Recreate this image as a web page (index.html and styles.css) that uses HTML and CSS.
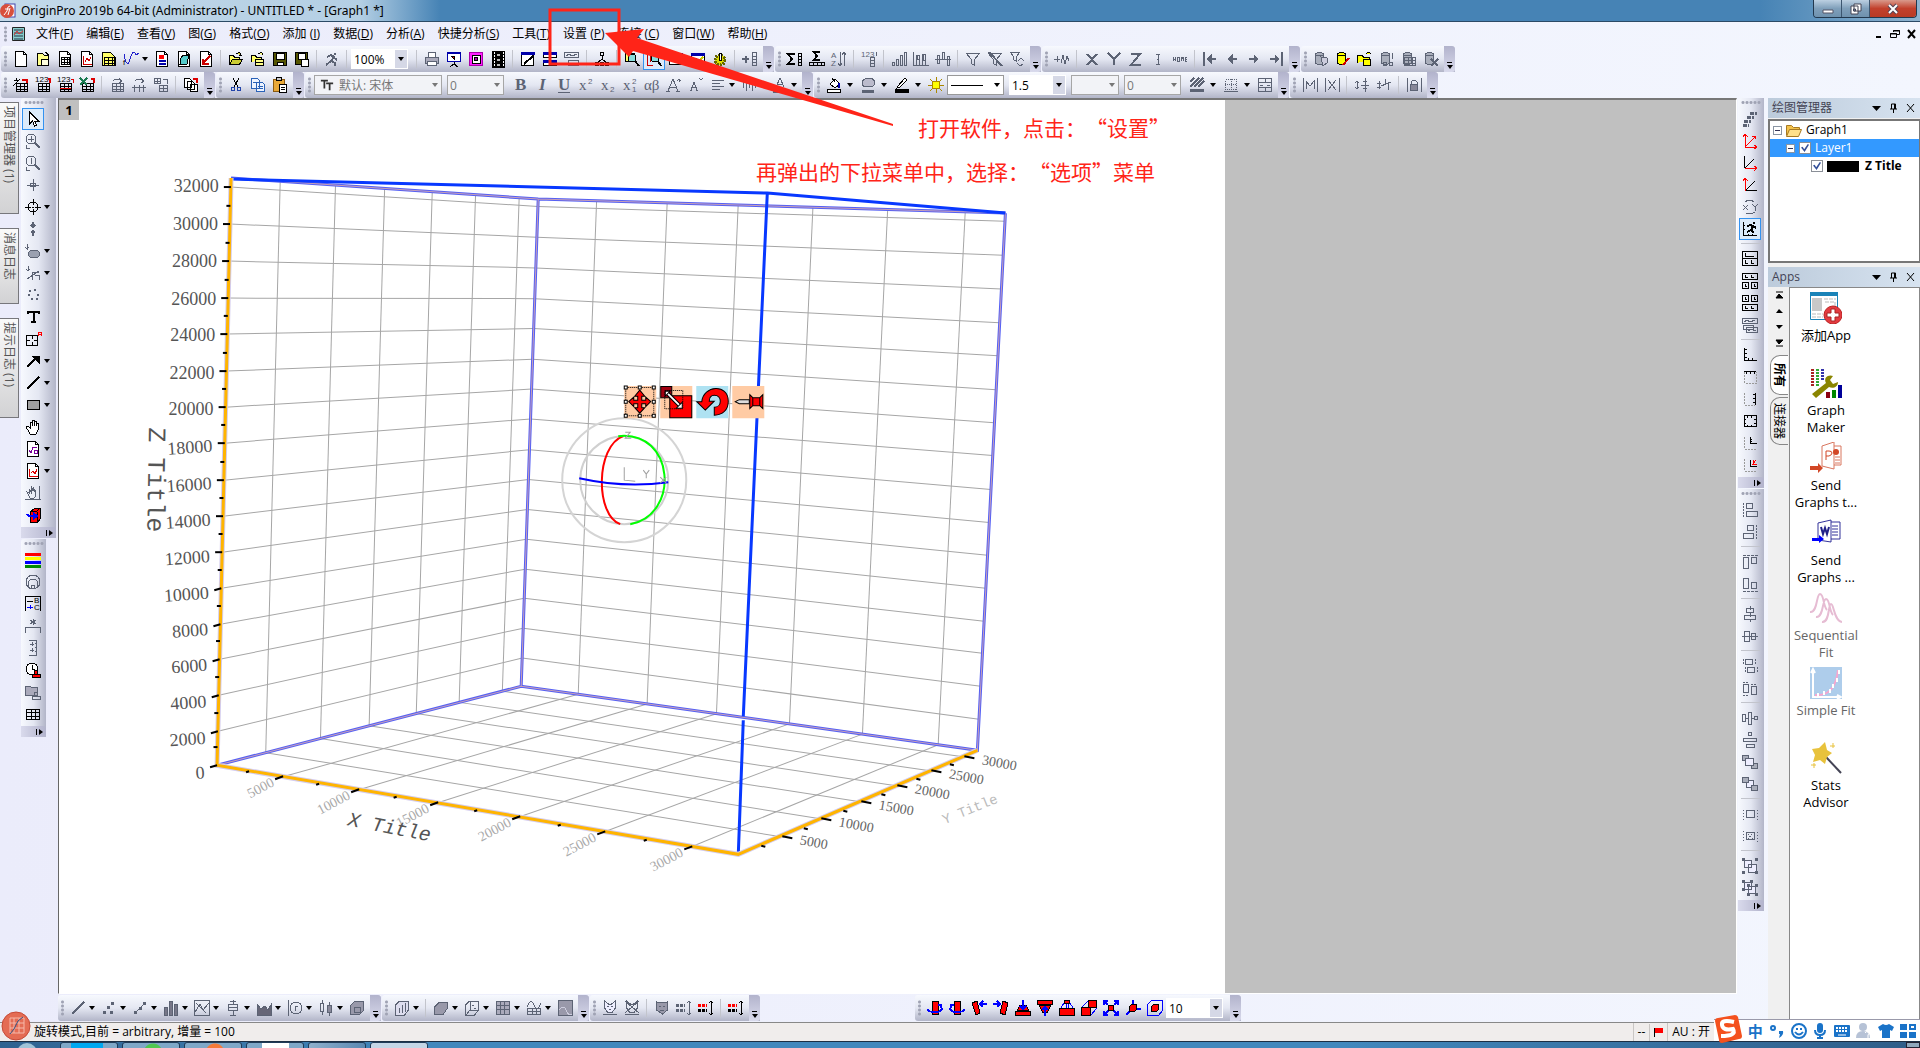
FILE: index.html
```html
<!DOCTYPE html>
<html lang="zh-CN">
<head>
    <meta charset="UTF-8">
    <meta name="viewport" content="width=device-width, initial-scale=1.0">
    <title>OriginPro 2019b</title>
    <link rel="stylesheet" href="styles.css">
</head>
<body>
    <!-- Title bar -->
    <header class="title-bar">
        <svg class="app-logo" viewBox="0 0 16 16"><rect x="5" y="1" width="10" height="13" fill="#fff" stroke="#44a"/><circle cx="7" cy="8" r="7" fill="#d8503c"/><path d="M4 12l3-4 1-4 2-1M5 6h4M8 12l2-7" stroke="#fff" fill="none"/></svg>
        <h1>OriginPro 2019b 64-bit (Administrator) - UNTITLED * - [Graph1 *]</h1>
        <div class="window-buttons">
            <button aria-label="Minimize"><svg viewBox="0 0 16 12"><path d="M3 7h10v3H3z" fill="#fff" stroke="#556"/></svg></button>
            <button aria-label="Restore"><svg viewBox="0 0 16 12"><path d="M6 1h7v7H6zM3 3h7v8H3z" fill="#fff" stroke="#445"/><path d="M5.500 6h2v2h-2z" stroke="#445" fill="#68a"/></svg></button>
            <button class="close" aria-label="Close"><svg viewBox="0 0 16 12"><path d="M4 2l8 8M12 2l-8 8" stroke="#545" stroke-width="4"/><path d="M4 2l8 8M12 2l-8 8" stroke="#fff" stroke-width="2"/></svg></button>
        </div>
    </header>

    <nav class="menu-bar">
        <i class="grip"></i>
        <svg class="doc-logo" viewBox="0 0 16 16"><path d="M2.500 1.500h12v13h-12z" fill="#8cc" stroke="#222"/><path d="M4 4h9M4 7h9M4 10h9M4 13h9" stroke="#234"/><path d="M4 9l3-4 2 3 4-3" stroke="#d33" fill="none"/></svg>
        <a href="#">文件(<u>F</u>)</a>
        <a href="#">编辑(<u>E</u>)</a>
        <a href="#">查看(<u>V</u>)</a>
        <a href="#">图(<u>G</u>)</a>
        <a href="#">格式(<u>O</u>)</a>
        <a href="#">添加 (<u>I</u>)</a>
        <a href="#">数据(<u>D</u>)</a>
        <a href="#">分析(<u>A</u>)</a>
        <a href="#">快捷分析(<u>S</u>)</a>
        <a href="#">工具(<u>T</u>)</a>
        <a href="#">设置 (<u>P</u>)</a>
        <a href="#">连接 (<u>C</u>)</a>
        <a href="#">窗口(<u>W</u>)</a>
        <a href="#">帮助(<u>H</u>)</a>
        <div class="child-buttons">
            <button aria-label="Minimize graph"><svg viewBox="0 0 10 10"><path d="M2 8h5" stroke="#000" stroke-width="2"/></svg></button>
            <button aria-label="Restore graph"><svg viewBox="0 0 10 10"><path d="M3.500 3V1.500h6v4H7M3 2h7M.5 4.500h6v4h-6zM0 5h7" stroke="#000" fill="none"/></svg></button>
            <button aria-label="Close graph"><svg viewBox="0 0 10 10"><path d="M2 1l7 8M9 1L2 9" stroke="#000" stroke-width="2"/></svg></button>
        </div>
    </nav>

    <!-- Toolbars -->
    <div class="tool-row">
        <div class="toolbar">
            <span data-tools="new folder sheet graph ygrid fx> layout note newgraph | open opentpl save savetpl | ~run |"></span>
            <label class="combo w56"><select aria-label="Zoom"><option>100%</option></select></label>
            <span data-tools="| ~print slide record film | edit rows ~panel | tree | find find2! table2 table3 gear | ~addcol"></span>
        </div>
        <div class="toolbar"><span data-tools="sumcol sumrow ~sort | ~setval | ~bars ~bars2 ~bars3 | ~filter ~nofilter ~refilter"></span></div>
        <div class="toolbar"><span data-tools="~addpeak | ~X ~Y ~Z ~errbar ~home | ~first ~left ~right ~last"></span></div>
        <div class="toolbar"><span data-tools="~db dbedit dbopen ~dbview ~dbgrid ~dbdel"></span></div>
    </div>
    <div class="tool-row">
        <div class="toolbar"><span data-tools="wizard imp1 imp2 excel | ~reimp ~reimp2 ~reimp3 | batch"></span></div>
        <div class="toolbar"><span data-tools="cut copy paste"></span></div>
        <div class="toolbar">
            <label class="combo off w128"><svg class="tt" viewBox="0 0 16 16"><path d="M1 3h8M5 3v9M7 6h8M11 6v8" stroke="#333" stroke-width="2"/></svg><select aria-label="Font"><option>默认: 宋体</option></select></label>
            <label class="combo off w56"><select aria-label="Font size"><option>0</option></select></label>
            <span data-tools="~B ~I ~U ~sup ~sub ~supsub ~greek ~Abig ~Asmall ~align> ~vlines> ~Acolor>"></span>
        </div>
        <div class="toolbar roomy">
            <span data-tools="bucket> ~palette> pen> sun"></span>
            <label class="combo line w56"><select aria-label="Line style"><option></option></select></label>
            <label class="combo w56"><select aria-label="Line width"><option>1.5</option></select></label>
            <label class="combo off w48"><select aria-label="Pattern"><option></option></select></label>
            <label class="combo off w56"><select aria-label="Pattern width"><option>0</option></select></label>
            <span data-tools="~hatch> ~border> ~merge"></span>
        </div>
        <div class="toolbar"><span data-tools="~maskM ~maskX | ~updown ~updown2 | ~lock"></span></div>
    </div>

    <main class="workspace">
        <aside class="side-tabs">
            <button class="long">项目管理器 (1)</button>
            <button>消息日志</button>
            <button class="mid">提示日志 (1)</button>
        </aside>

        <div class="tool-col left">
            <div class="toolbar wide"><span data-tools="cursor! ~zoomin ~zoomout ~cross target> ~reader ~ellipse> ~mask> ~dots text region arrow> line> rect> hand formula> minigraph> ~pan rotate3d"></span></div>
            <div class="toolbar"><span data-tools="colorbars ~bubble legend ~star ~scale clock ~stamp grid"></span></div>
        </div>

        <section class="document">
            <div class="canvas">
                <div class="sheet">
                    <span class="layer-no">1</span>
                    <svg class="plot" viewBox="59 100 1165 892" preserveAspectRatio="xMinYMin meet">
                        <g id="grid"></g>
                        <path class="frame" d="M231 178L538 199L1005 213M538 199L521 686M217 765L521 686L977 750L1005 213"/>
                        <path class="frame-core" d="M231 178L538 199L1005 213M538 199L521 686M217 765L521 686L977 750L1005 213"/>
                        <path class="front" d="M231 179L767 193L1005 213M767 193L743 716M743 720L738 854"/>
                        <path class="axis-glow" d="M231 178L217 765L738 854L977 750"/>
                        <path class="axis" d="M231 178L217 765L738 854L977 750"/>
                        <g id="ticks"></g>
                        <g id="labels"></g>
                        <text class="axis-title" transform="translate(149 427) rotate(91)">Z Title</text>
                        <text class="axis-title x" transform="translate(347 825) rotate(11)">X Title</text>
                        <text class="axis-title y" transform="translate(944 824) rotate(-22)">Y Title</text>

                        <!-- Rotation gizmo -->
                        <g fill="none" stroke-width="2">
                            <circle cx="624" cy="480" r="62" stroke="#d4d4d4"/>
                            <circle cx="624" cy="480" r="44" stroke="#d0d0d0"/>
                            <path d="M623 436C595 446 595 515 620 524" stroke="#f00"/>
                            <path d="M618 436C675 430 680 515 630 524" stroke="#0f0"/>
                            <path d="M579 478Q624 488 668 482" stroke="#00f"/>
                            <path d="M624 467v13l11 1M625 432h5l-5 6h6M643 470l3 4 3-4M646 474v4M660 477l6 6M666 477l-6 6" stroke="#a0a0a0" stroke-width="1"/>
                        </g>
                        <g transform="translate(624 386)">
                            <path d="M0 0h32v32H0zM36 0h32v32H36zM108 0h32v32h-32z" fill="#ffcba4"/>
                            <path d="M72 0h32v32H72z" fill="#aee2f2"/>
                            <path d="M1.500 1.500h28v28h-28z" fill="none" stroke="#000" stroke-dasharray="1 1"/>
                            <path d="M0 0h3v3H0zM14 0h3v3h-3zM28 0h3v3h-3zM0 14h3v3H0zM28 14h3v3h-3zM0 28h3v3H0zM14 28h3v3h-3zM28 28h3v3h-3z" fill="#fff" stroke="#000"/>
                            <path d="M15.500 4l5 6h-3v4h4v-3l5 4.500-5 5v-3h-4v4h3l-5 5.500-5-5.500h3v-4h-4v3l-5-5 5-4.500v3h4v-4h-3z" fill="#f00" stroke="#000"/>
                            <path d="M36.500.5h11v11h-11z" fill="#a00010" stroke="#000"/>
                            <path d="M45.500 9.500h22v22h-22z" fill="#f00" stroke="#000"/>
                            <path d="M40.500 4.500h18v18h-18z" fill="none" stroke="#000" stroke-dasharray="1 1"/>
                            <path d="M42 6l14 14" stroke="#000" stroke-width="4"/><path d="M42 6l14 14" stroke="#fff" stroke-width="2"/><path d="M41 5h5l-5 5zM58 22h-6l6-6z" fill="#fff" stroke="#000"/>
                            <path d="M72.500 15.500h5C79-1 104-3 104 15c0 9-6 14-14 14v-8c8 0 8-12 0-12-4 0-5 3-5 6h5l-9 9z" fill="#f00" stroke="#000"/>
                            <path d="M111 15.500l4-2h10v4h-10z" fill="#ddd" stroke="#000"/>
                            <path d="M125.500 8.500l3 3h7l3-3v14l-3-3h-7l-3 3zM128.500 11v9M135.500 11v9" fill="#f00" stroke="#000"/>
                        </g>
                    </svg>
                </div>
            </div>
            <div class="tool-row bottom">
                <div class="toolbar"><span data-tools="~line> ~scatter> ~linedot> ~column> ~peaks> ~box> ~area> ~polar> ~candle> ~cube"></span></div>
                <div class="toolbar"><span data-tools="~bar3d> | ~surface> ~wire> ~heat> ~wave> ~contour"></span></div>
                <div class="toolbar"><span data-tools="~fox ~foxoff | ~mask2 ~swap swapred | swapall"></span></div>
                <div class="toolbar apart">
                    <span data-tools="rotL rotR tiltL tiltR tiltD tiltU persp persp2 fit axes3d box3d"></span>
                    <label class="combo w56"><select aria-label="Rotation step"><option>10</option></select></label>
                </div>
            </div>
        </section>

        <div class="tool-col right">
            <div class="toolbar"><span data-tools="~stack axA axB axC ~xy speed! | lay1 lay2 lay3 ~lay4 | axL axT axR axBox axin axinr"></span></div>
            <div class="toolbar"><span data-tools="~alL ~alR | ~alT ~alB | ~alH ~alV | ~same1 ~same2 | ~dist1 ~dist2 ~front ~back | ~grp1 ~grp2 | ~grp3 ~grp4"></span></div>
        </div>

        <aside class="panels">
            <section class="panel manager">
                <header><h2>绘图管理器</h2><span class="panel-tools"></span></header>
                <ul class="tree">
                    <li><i class="toggle"></i><svg class="dir" viewBox="0 0 16 13"><path d="M.5 11.500v-10h5l2 2h6v3" fill="#f3c24b" stroke="#a77a22"/><path d="M.5 12.500l3-7h12l-3 7z" fill="#ffe08a" stroke="#a77a22"/></svg><span>Graph1</span></li>
                    <li class="selected"><i class="toggle"></i><input type="checkbox" id="layer1" checked><label for="layer1">Layer1</label></li>
                    <li class="leaf"><input type="checkbox" id="ztitle" checked><label for="ztitle"><i class="swatch"></i>Z Title</label></li>
                </ul>
            </section>
            <section class="panel apps">
                <header><h2>Apps</h2><span class="panel-tools"></span></header>
                <div class="apps-body">
                    <div class="apps-tabs">
                        <button aria-label="Top"><svg viewBox="0 0 8 8"><path d="M1 1h7M1 7h7L4 3z" stroke="#000"/></svg></button>
                        <button aria-label="Up"><svg viewBox="0 0 8 8"><path d="M1 6h7L4 2z"/></svg></button>
                        <button aria-label="Down"><svg viewBox="0 0 8 8"><path d="M1 2h7L4 6z"/></svg></button>
                        <button aria-label="Bottom"><svg viewBox="0 0 8 8"><path d="M1 1h7L4 5zM1 7h7" stroke="#000"/></svg></button>
                        <button class="tab active">所有</button>
                        <button class="tab">连接器</button>
                    </div>
                    <div class="apps-list">
                        <button><svg viewBox="0 0 32 32"><path d="M.5 1.500h27v26H.5z" fill="#fff" stroke="#1a83b8"/><path d="M0 0h28v4H0z" fill="#1a83b8"/><path d="M2 6h10v13H2z" fill="#c8c8c8"/><path d="M14 7h12M15 10h10v10M2 22h11M2 25h11" stroke="#bbb" stroke-dasharray="4 1" fill="none"/><circle cx="23" cy="23" r="9" fill="#e33b40" stroke="#b22"/><path d="M21 17h4v4h4v4h-4v4h-4v-4h-4v-4h4z" fill="#fff" stroke="#a22"/></svg><span>添加App</span></button>
                        <button><svg viewBox="0 0 32 32"><path d="M2.500 2v17" stroke="#a22" stroke-width="3" stroke-dasharray="2 1"/><path d="M7.500 2v17" stroke="#3a3" stroke-width="3" stroke-dasharray="2 1"/><path d="M12.500 2v12" stroke="#33a" stroke-width="3" stroke-dasharray="2 1"/><path d="M2 27l14-11c-3-6 3-9 7-7l-3 4 3 4 5-2c0 5-5 7-9 5L6 31z" fill="#8a8500"/><path d="M16 25h4v6h-4z" fill="#8b0010"/><path d="M22 23h4v8h-4z" fill="#080"/><path d="M28 18h4v13h-4z" fill="#009"/></svg><span>Graph Maker</span></button>
                        <button><svg viewBox="0 0 32 32"><path d="M12 4l12-4v27l-12-3zM24 4h7v19h-7M25 15h5M25 18h5M25 21h5" fill="#fff" stroke="#d9765f"/><circle cx="26" cy="10" r="3" fill="#d24726"/><path d="M16 18V9h3q3 0 3 2t-3 3h-3" fill="none" stroke="#d24726"/><path d="M0 24h8v-3l5 5-5 5v-3H0z" fill="#d24726"/></svg><span>Send Graphs t...</span></button>
                        <button><svg viewBox="0 0 32 32"><path d="M8 6l13-3v22L8 23zM21 5h9v17h-9M22 9h6M22 12h6M22 15h6M22 18h6" fill="#fff" stroke="#33339a"/><path d="M11 10l2 7 2-6 2 6 2-7" fill="none" stroke="#222288" stroke-width="2"/><path d="M2 21h7v-3l5 4-5 4v-2H2z" fill="#00f"/></svg><span>Send Graphs ...</span></button>
                        <button disabled><svg viewBox="0 0 32 32"><path d="M0 20c8 1 6-18 10-18s3 12 7 16M6 25c8 1 6-18 10-18s3 12 7 16M12 30c8 1 6-18 9-18s3 17 11 18" fill="none" stroke="#e6bcd3" stroke-width="2"/></svg><span>Sequential Fit</span></button>
                        <button disabled><svg viewBox="0 0 32 32"><path d="M0 0h32v32H0z" fill="#aecdeb"/><path d="M3 3v27h27M1 6l2-4 2 4M27 28l4 2-4 2" stroke="#fff" stroke-width="2" fill="none"/><path d="M5 28q20 2 23-25" stroke="#f6a6cf" stroke-width="2" fill="none"/><path d="M8 26v4M14 24v4M20 22v4M23 17v4M27 11v4M29 3v4" stroke="#fff" stroke-width="2"/></svg><span>Simple Fit</span></button>
                        <button><svg viewBox="0 0 32 32"><path d="M16 15l15 16" stroke="#445" stroke-width="2"/><path d="M15 0l2 8 5 3-5 4-2 7-5-4-7 2 2-7-3-6 7-1z" fill="#e8c23c"/><path d="M23 1v5M20 4h5M4 21v5M1 23h5" stroke="#e8c23c"/></svg><span>Stats Advisor</span></button>
                    </div>
                </div>
            </section>
        </aside>
    </main>

    <footer class="status-bar">
        <svg class="orb" viewBox="0 0 30 30"><circle cx="15" cy="15" r="14" fill="#e46c54" stroke="#c64b38"/><path d="M9 7h14v15H9zM13 7v15M18 7v15M9 12h14M9 17h14" stroke="#f6b9aa" fill="none"/><path d="M9 23l4-5 4-8 5-4" stroke="#358" fill="none"/></svg>
        <span>旋转模式,目前 = arbitrary, 增量 = 100</span>
        <span class="cell push">--</span>
        <span class="cell"><i class="flag"></i></span>
        <span class="cell">AU : 开</span>
        <div class="ime">
            <svg class="sogou" viewBox="0 0 28 28"><path d="M1 6q0-3 3-3L21 0q2 0 3 2l4 19q0 3-3 3L8 28q-3 0-3-3z" fill="#f4511e"/><path d="M20 7Q7 4 8 10t11 4q4 7-12 7" fill="none" stroke="#fff" stroke-width="4"/></svg>
            <b>中</b>
            <svg viewBox="0 0 16 16"><circle cx="4" cy="5" r="2" fill="none" stroke="#1a73c8" stroke-width="2"/><path d="M10 8h4q1 4-4 7l1-4h-1z" fill="#1a73c8"/></svg>
            <svg viewBox="0 0 16 16"><g fill="none" stroke="#1a73c8" stroke-width="2"><circle cx="8" cy="8" r="7"/><path d="M4 9q4 5 8 0M6 5v2M10 5v2"/></g></svg>
            <svg viewBox="0 0 16 16"><rect x="5" y="0" width="6" height="10" rx="3" fill="#1a73c8"/><path d="M3 7q0 5 5 5t5-5M8 12v3M5 15h6" fill="none" stroke="#1a73c8" stroke-width="2"/></svg>
            <svg viewBox="0 0 16 16"><rect y="2" width="16" height="12" rx="1" fill="#1a73c8"/><path d="M2 5h12M2 8h12" stroke="#fff" stroke-width="2" stroke-dasharray="2 1"/><path d="M4 12h8" stroke="#fff"/></svg>
            <svg viewBox="0 0 16 16"><circle cx="7" cy="4" r="4" fill="#b6c2d6"/><path d="M0 15q0-7 7-7t7 7z" fill="#b6c2d6"/><path d="M9 10q1-2 3-1t0 3v3" stroke="#fff" fill="none"/></svg>
            <svg viewBox="0 0 16 16"><path d="M5 1q3 2 6 0l5 3-2 4-2-1v8H4V7L2 8 0 4z" fill="#1a73c8"/></svg>
            <svg viewBox="0 0 16 16"><path d="M0 1h7v6H0zM0 9h7v6H0zM9 9h7v6H9z" fill="#1a73c8"/><path d="M10 2h5v4h-5z" fill="none" stroke="#1a73c8" stroke-width="2"/></svg>
        </div>
    </footer>

    <div class="taskbar">
        <i class="start"></i>
        <i class="task cyan"></i><i class="task green"></i><i class="task orange"></i><i class="task white"></i><i class="task"></i><i class="task active"></i>
        <i class="show-desktop"></i>
    </div>

    <!-- Tutorial annotations over the window -->
    <div class="notes">
        <svg viewBox="0 0 400 140">
            <rect x="10" y="10" width="69" height="54" fill="none" stroke="#ff2418" stroke-width="3"/>
            <path d="M65 33L104 29 97 38 353 124v2L93 51 89 57z" fill="#ff2418"/>
        </svg>
        <p class="note first">打开软件，点击：“设置”</p>
        <p class="note second">再弹出的下拉菜单中，选择：“选项”菜单</p>
    </div>

    <script src="app.js"></script>
</body>
</html>
```
FILE: styles.css
```css
* {
    box-sizing: border-box;
}

body {
    margin: 0;
    height: 100vh;
    display: flex;
    flex-direction: column;
    position: relative;
    overflow: hidden;
    background: linear-gradient(to right, #ebecfb, #f3f6fe);
    font-family: "Open Sans", "Noto Sans CJK SC", sans-serif;
    font-size: 12px;
    color: #000;
}

button, select, input {
    font: inherit;
    color: inherit;
}

button {
    padding: 0;
    border: none;
    background: none;
}

h1, h2, p, ul {
    margin: 0;
    padding: 0;
    font-weight: normal;
}

/* Title bar */
.title-bar {
    flex: none;
    height: 22px;
    display: flex;
    align-items: center;
    background: linear-gradient(to right, #c3d9ea, #b4cfe4 360px, #4683b5 440px, #4683b5 1760px, #8fb4d0);
    border-bottom: 1px solid #2b4a66;
}

.app-logo {
    width: 16px;
    height: 16px;
    margin-right: 5px;
}

.title-bar h1 {
    font-family: "Noto Sans", sans-serif;
    font-size: 12px;
    line-height: 20px;
}

.window-buttons {
    margin-left: auto;
    margin-right: 3px;
    align-self: flex-start;
    display: flex;
    height: 18px;
    border: 1px solid #22384e;
    border-top: none;
    border-radius: 0 0 4px 4px;
    overflow: hidden;
}

.window-buttons button {
    width: 28px;
    background: linear-gradient(#bcd0e2, #7f9fba 50%, #6f92ae);
    border-right: 1px solid #3c5670;
}

.window-buttons .close {
    width: 46px;
    border-right: none;
    background: linear-gradient(#d99a8c, #c2402c 50%, #b83a24);
}

.window-buttons svg {
    width: 16px;
    height: 12px;
    display: block;
    margin: 0 auto;
}

/* Menu */
.menu-bar {
    flex: none;
    height: 24px;
    display: flex;
    align-items: center;
    padding-left: 3px;
}

.menu-bar a {
    color: #000;
    text-decoration: none;
    margin-right: 13px;
    white-space: nowrap;
    line-height: 20px;
}

.doc-logo {
    width: 16px;
    height: 16px;
    margin: 0 10px 0 2px;
}

.child-buttons {
    margin-left: auto;
    display: flex;
    gap: 6px;
    padding-right: 4px;
}

.child-buttons svg {
    width: 10px;
    height: 10px;
    display: block;
}

/* Toolbars */
.grip {
    flex: none;
    width: 9px;
    height: 16px;
    background: radial-gradient(circle, #a0a3b4 1px, transparent 2px) 0 0 / 9px 4px;
}

.menu-bar .grip {
    width: 5px;
    background-size: 5px 4px;
}

.tool-row {
    flex: none;
    height: 26px;
    display: flex;
    gap: 1px;
    padding-left: 1px;
}

.toolbar {
    display: flex;
    align-items: center;
    background: linear-gradient(#f7f9fe, #e4e7f2 50%, #b2b5c8);
    border-radius: 3px 0 0 3px;
}

.toolbar span {
    display: flex;
    align-items: center;
}

.tool {
    flex: none;
    width: 22px;
    height: 22px;
    display: flex;
    align-items: center;
    justify-content: center;
    color: #000;
}

.tool svg {
    width: 16px;
    height: 16px;
    overflow: visible;
    fill: none;
    stroke: currentColor;
    shape-rendering: crispEdges;
}

.tool svg text {
    font: 15px "Liberation Serif", serif;
    fill: currentColor;
    stroke: none;
}

.tool svg .tiny {
    font: 8px "Liberation Sans", sans-serif;
}

.tool svg .strong {
    font-size: 17px;
    font-weight: bold;
}

.tool svg .strong.slant {
    font-style: italic;
}

.tool.muted {
    color: #5c6374;
}

.tool.on {
    background: #dcebfa;
    border: 1px solid #3392f0;
}

.drop {
    flex: none;
    width: 9px;
    height: 22px;
    display: flex;
    align-items: center;
}

.roomy .drop {
    width: 12px;
    padding-left: 2px;
}

.drop::before, .combo::after {
    content: "";
    border: 3px solid transparent;
    border-top: 4px solid #000;
    border-bottom: none;
}

.sep {
    flex: none;
    width: 1px;
    height: 18px;
    margin: 0 4px 0 3px;
    background: #c2c4cc;
}

.overflow {
    flex: none;
    align-self: stretch;
    width: 11px;
    margin-left: 2px;
    display: flex;
    flex-direction: column;
    justify-content: flex-end;
    align-items: center;
    padding-bottom: 3px;
    background: linear-gradient(#b2b3cc, #d9daec);
    border-radius: 0 3px 3px 0;
}

.overflow::before {
    content: "";
    width: 5px;
    height: 1px;
    margin-bottom: 2px;
    background: #000;
}

.overflow::after {
    content: "";
    border: 3px solid transparent;
    border-top: 4px solid #000;
    border-bottom: none;
}

.combo {
    flex: none;
    height: 20px;
    display: flex;
    align-items: center;
    background: linear-gradient(to left, #d5d8e6 12px, #fff 12px);
    border: 1px solid #fff;
    margin-right: 5px;
    padding-right: 3px;
}

.combo select {
    appearance: none;
    border: none;
    background: none;
    flex: 1;
    min-width: 0;
    height: 18px;
    padding: 0 2px;
}

.combo.off {
    background: #f2f3f7;
    border: 1px solid #a6a6a6;
    color: #777;
}

.combo.off::after {
    border-top-color: #777;
}

.combo.line {
    background: #fff;
    border: 1px solid #999;
}

.combo.line select {
    background: linear-gradient(#000, #000) 3px 9px / 32px 1px no-repeat;
}

.w48 { width: 48px; }
.w56 { width: 57px; }
.w128 { width: 128px; }

.tt {
    width: 14px;
    height: 14px;
    margin: 0 3px 0 5px;
}

/* Main area */
.workspace {
    flex: 1;
    min-height: 0;
    display: flex;
}

.side-tabs {
    flex: none;
    width: 21px;
    padding-top: 4px;
    display: flex;
    flex-direction: column;
    gap: 14px;
}

.side-tabs button {
    width: 19px;
    height: 76px;
    padding: 3px 0;
    writing-mode: vertical-rl;
    text-orientation: sideways;
    text-align: left;
    line-height: 16px;
    color: #555;
    white-space: nowrap;
    background: linear-gradient(#fafafa, #d2d2d4);
    border: 1px solid #77777c;
    border-left: none;
}

.side-tabs .long {
    height: 112px;
}

.side-tabs .mid {
    height: 100px;
}

.tool-col {
    flex: none;
    display: flex;
    flex-direction: column;
    align-items: flex-start;
    gap: 1px;
}

.tool-col.left {
    width: 37px;
}

.tool-col.right {
    width: 31px;
    padding-left: 1px;
}

.tool-col .toolbar {
    flex-direction: column;
    align-items: stretch;
    width: 25px;
    background: linear-gradient(to right, #f7f9fe, #e4e7f2 50%, #b2b5c8);
}

.tool-col .toolbar.wide {
    width: 35px;
}

.tool-col.right .toolbar {
    width: 26px;
}

.tool-col .toolbar span {
    display: grid;
    grid-template-columns: 22px 1fr;
    padding-left: 1px;
}

.tool-col .tool {
    grid-column: 1;
}

.tool-col .grip {
    width: 20px;
    height: 10px;
    margin-left: 3px;
    background: radial-gradient(circle, #a0a3b4 1px, transparent 2px) 0 0 / 4px 9px;
}

.tool-col .sep {
    grid-column: 1;
    width: 19px;
    height: 1px;
    margin: 3px 2px 4px;
}

.tool-col .overflow {
    flex-direction: row;
    align-items: center;
    width: auto;
    height: 11px;
    margin: 1px 0 0;
    padding: 0 3px;
    background: linear-gradient(to right, #d9daec, #b2b3cc);
}

.tool-col .overflow::before {
    width: 1px;
    height: 6px;
    margin: 0 2px 0 0;
}

.tool-col .overflow::after {
    border: 3px solid transparent;
    border-left: 4px solid #000;
    border-right: none;
}

.document {
    flex: 1;
    min-width: 0;
    display: flex;
    flex-direction: column;
}

.canvas {
    flex: 1;
    min-height: 0;
    background: #c0c0c0;
    border: 1px solid #fff;
    border-top: 2px solid #777;
    border-left: 1px solid #666;
}

.sheet {
    position: relative;
    width: 69.5%;
    height: 100%;
    background: #fff;
}

.plot {
    display: block;
    width: 100%;
    height: 100%;
}

.layer-no {
    position: absolute;
    left: 0;
    top: 0;
    width: 20px;
    height: 20px;
    background: #c0c0c0;
    text-align: center;
    line-height: 20px;
    font-size: 13px;
    font-weight: bold;
}

#grid path {
    fill: none;
    stroke: #a6a6a6;
}

.frame {
    fill: none;
    stroke: #5560f4;
    stroke-width: 3;
}

.frame-core {
    fill: none;
    stroke: #c8a0b8;
}

.front {
    fill: none;
    stroke: #0838ff;
    stroke-width: 3;
}

.axis-glow {
    fill: none;
    stroke: #d4cdee;
    stroke-width: 5;
}

.axis {
    fill: none;
    stroke: #ffb400;
    stroke-width: 3;
}

#ticks path {
    stroke: #000;
    stroke-width: 2;
}

#labels text {
    font-family: "Liberation Serif", serif;
    font-size: 18px;
    fill: #555;
}

#labels .x-label {
    font-size: 14px;
    fill: #aaa;
}

#labels .y-label {
    font-size: 14px;
    fill: #666;
}

.axis-title {
    font-family: "Liberation Mono", monospace;
    font-size: 25px;
    fill: #555;
}

.axis-title.x {
    font-size: 20px;
    font-style: italic;
}

.axis-title.y {
    font-size: 14px;
    fill: #bbb;
}

.tool-row.bottom {
    height: 28px;
    padding: 1px 0;
}

.toolbar.apart {
    margin-left: 154px;
}

/* Right-hand panels */
.panels {
    flex: none;
    width: 152px;
    display: flex;
    flex-direction: column;
    gap: 4px;
    background: #f0f0f0;
}

.panel header {
    height: 20px;
    display: flex;
    align-items: center;
    justify-content: space-between;
    padding: 0 5px 0 4px;
    background: linear-gradient(to right, #bccbdb, #d7e3f0);
}

.panel h2 {
    font-size: 12px;
    line-height: 20px;
    color: #445;
}

.panel-tools {
    display: flex;
}

.panel-tools svg {
    width: 44px;
    height: 10px;
}

.tree {
    list-style: none;
    height: 144px;
    margin-top: 1px;
    background: #fff;
    border: 2px solid #777;
    border-right-width: 1px;
}

.tree li {
    height: 18px;
    display: flex;
    align-items: center;
    gap: 4px;
    padding-left: 3px;
    line-height: 18px;
}

.tree .selected {
    padding-left: 16px;
    background: #3399ff;
    color: #fff;
}

.tree .leaf {
    padding-left: 41px;
    font-weight: bold;
}

.tree input {
    appearance: none;
    width: 12px;
    height: 12px;
    margin: 0;
    display: grid;
    background: #fff;
    border: 1px solid #8a8f97;
}

.tree input:checked::before {
    content: "";
    margin: 1px;
    background: #34509a;
    clip-path: polygon(0 45%, 20% 35%, 40% 65%, 85% 0, 100% 10%, 45% 100%);
}

.tree label {
    display: flex;
    align-items: center;
    gap: 6px;
}

.toggle {
    width: 9px;
    height: 9px;
    border: 1px solid #8a95a3;
    background: linear-gradient(#335, #335) 1px 3px / 5px 1px no-repeat #fff;
}

.dir {
    width: 16px;
    height: 13px;
}

.swatch {
    width: 32px;
    height: 11px;
    background: #000;
}

.apps {
    flex: 1;
    display: flex;
    flex-direction: column;
    min-height: 0;
}

.apps-body {
    flex: 1;
    display: flex;
    min-height: 0;
}

.apps-tabs {
    flex: none;
    width: 21px;
    display: flex;
    flex-direction: column;
    align-items: center;
}

.apps-tabs button {
    height: 16px;
}

.apps-tabs svg {
    width: 8px;
    height: 8px;
    display: block;
}

.apps-tabs .tab {
    width: 18px;
    height: 48px;
    margin-top: 2px;
    writing-mode: vertical-rl;
    text-orientation: sideways;
    line-height: 16px;
    border: 1px solid #888;
    border-right: none;
    border-radius: 10px 0 0 10px;
}

.apps-tabs .active {
    height: 40px;
    margin-top: 4px;
    background: #fff;
    font-weight: bold;
}

.apps-list {
    flex: 1;
    background: #fff;
    border: 1px solid #888;
    border-bottom: none;
    padding-top: 4px;
}

.apps-list button {
    width: 72px;
    height: 75px;
    display: flex;
    flex-direction: column;
    align-items: center;
    gap: 3px;
    font-size: 13px;
    line-height: 17px;
}

.apps-list button:disabled {
    color: #666;
}

.apps-list svg {
    width: 32px;
    height: 32px;
    flex: none;
}

/* Status bar and taskbar */
.status-bar {
    flex: none;
    height: 19px;
    display: flex;
    align-items: center;
    position: relative;
    background: #f0edec;
    border-top: 1px solid #888;
    padding-left: 34px;
    line-height: 18px;
}

.orb {
    position: absolute;
    left: 1px;
    bottom: 0;
    width: 30px;
    height: 30px;
}

.cell {
    padding: 0 4px;
    border-left: 1px solid #c9c6c4;
}

.push {
    margin-left: auto;
}

.flag {
    display: block;
    width: 9px;
    height: 9px;
    margin: 4px 0;
    background: linear-gradient(#f00, #f00) 0 0 / 9px 5px no-repeat;
    border-left: 1px solid #000;
}

.ime {
    width: 206px;
    height: 22px;
    align-self: flex-end;
    display: flex;
    align-items: center;
    justify-content: space-between;
    padding-right: 4px;
    background: #fff;
    border-top: 1px solid #99a;
}

.ime svg {
    width: 16px;
    height: 16px;
}

.ime b {
    font-size: 15px;
    color: #1a73c8;
}

.ime .sogou {
    width: 28px;
    height: 28px;
    margin-top: -4px;
}

.taskbar {
    flex: none;
    height: 7px;
    display: flex;
    overflow: hidden;
    border-top: 1px solid #1c2f44;
    background: linear-gradient(to right, #2f6290, #4288bd 430px, #4288bd 70%, #2f5d88);
}

.start {
    width: 20px;
    height: 20px;
    margin: 1px 23px 0 17px;
    border-radius: 50%;
    background: #9fc3d8;
}

.task {
    width: 58px;
    height: 12px;
    margin-right: 4px;
    border: 1px solid #1f3b58;
    border-radius: 3px;
    background: linear-gradient(to right, #8fb0cc, #5b89b2);
}

.task.active { background: #c4d6e6; }
.task.cyan { background: linear-gradient(to right, #7fa8c8 10px, #00a8f0 10px, #00a8f0 42px, #7fa8c8 42px); }
.task.green { background: radial-gradient(circle at 30px 10px, #50c850 9px, #7fa8c8 10px); }
.task.orange { background: radial-gradient(circle at 30px 10px, #f57a3a 9px, #7fa8c8 10px); }
.task.white { background: linear-gradient(to right, #7fa8c8 15px, #fff 15px, #fff 42px, #7fa8c8 42px); }

.show-desktop {
    width: 14px;
    margin-left: auto;
    background: #8fa8bc;
    border: 1px solid #223;
}

/* Tutorial annotations */
.notes {
    position: absolute;
    left: 540px;
    top: 0;
    width: 640px;
    pointer-events: none;
}

.notes svg {
    position: absolute;
    left: 0;
    top: 0;
    width: 400px;
    height: 140px;
}

.note {
    position: absolute;
    white-space: nowrap;
    font-family: "Noto Sans CJK SC", sans-serif;
    font-size: 21px;
    line-height: 30px;
    text-spacing-trim: space-all;
    color: #ff2418;
}

.note.first {
    left: 378px;
    top: 112px;
}

.note.second {
    left: 216px;
    top: 156px;
}
```
FILE: app.js
```js
// Shared icon parts
const page = '<path d="M2.500.5h8l3 3v12h-11z" fill="#fff"/><path d="M10.500.5v3h3"/>';
const cells = '<path d="M3.500 6.500h11v8h-11zM3 9.500h12M3 12.500h12M7.500 6v9M11.500 6v9"/>';
const cyl = '<path d="M2.500 3v9q4 3 8 0V3q-4-3-8 0z" fill="#a9aebb"/><path d="M3 4q4 2 8 0"/>';
const ycyl = '<path d="M2.500 3v9q4 3 8 0V3q-4-3-8 0z" fill="#ff0"/><path d="M3 4q4 2 8 0"/>';
const red = 'fill="#f00" stroke="#000"';
const blue = 'stroke="#00f" stroke-width="2"';
const ch = (c, x = 2, extra = '') => `<text x="${x}" y="13" ${extra}>${c}</text>`;
const tiny = (c, x, y) => `<text class="tiny" x="${x}" y="${y}">${c}</text>`;

const icons = {
    new: page,
    folder: '<path d="M2.500 2.500h5l2 2h4v10h-11z" fill="#ff8"/><path d="M10 1l4 3M6 8h7v6H6z" fill="#ffd"/>',
    sheet: page + '<path d="M4.500 6.500h8v7h-8zM4 8.500h9M4 11.500h9M7.500 6v8M10.500 6v8"/>',
    graph: page + '<path d="M4.500 5v8.500h8M6 11l2-4 2 3 2-4" stroke="#c00"/>',
    ygrid: '<path d="M1.500 1.500h8l4 4v9h-12z" fill="#ff6"/>' + cells,
    fx: '<path d="M1 3q3 16 6 5t6-4l3-2" stroke="#22c"/>' + tiny('f', 0, 14),
    layout: page + '<path d="M5 4h4v3H5z" fill="#f00" stroke="#f00"/><path d="M5 10h7M5 13h7" stroke-width="2" stroke="#00a"/>',
    note: page + '<path d="M5 7l2-3h6l-2 9H4z" fill="#5cc"/>',
    newgraph: page + '<path d="M4 13l8-8M5 8v5h6" stroke="#c00" stroke-width="2"/>',
    open: '<path d="M1.500 13V4.500h4l1 2h5v2" fill="#ff6"/><path d="M1.500 13.500l3-5h10l-3 5zM8 3q4-3 5 1M11 4h3" fill="#cc3"/>',
    opentpl: '<path d="M1.500 11V4.500h4l1 2h5v2" fill="#ff6"/><path d="M5.500 8.500h8v6h-8zM5 11h9M8 3q4-3 5 1" fill="#ff8"/>',
    save: '<path d="M1.500 1.500h13v13h-13z" fill="#550"/><path d="M4 2h8v6H4z" fill="#fff"/><path d="M5 11h6v3H5z" fill="#fff"/>',
    savetpl: '<path d="M1.500 1.500h12v12h-12z" fill="#550"/><path d="M4 2h7v6H4zM7.500 8.500h7v7h-7z" fill="#fff"/>',
    run: '<circle cx="11" cy="3" r="1" fill="#777"/><path d="M3 6l4-2 3 2-3 4-5 4M7 10l4 2v3M9 6l4 3" stroke-width="2"/>',
    print: '<path d="M1.500 6.500h13v6h-13z" fill="#aab"/><path d="M4.500 1.500h7v5h-7zM3.500 10.500h9v4h-9z" fill="#fff"/>',
    slide: '<path d="M1.500 2.500h13v8h-13z" fill="#fff" stroke="#00a"/><path d="M1 2h14" stroke="#00a" stroke-width="2"/><path d="M5 5h3v3z" fill="#f00"/><path d="M8 11v2l-4 3M8 13l4 3"/>',
    record: '<path d="M1.500 1.500h13v13h-13z" fill="#f2f" stroke="#a0a"/><path d="M4 4h8v8H4z" fill="#fff"/><circle cx="8" cy="8" r="2" fill="#a0a"/>',
    film: '<path d="M2 0h12v16H2z" fill="#000"/><path d="M6 2h4v3H6zM6 7h4v3H6zM6 12h4v3H6z" fill="#bbb"/><path d="M4 1v15M13 1v15" stroke="#fff" stroke-dasharray="2 1"/>',
    edit: '<path d="M1.500 2.500h12v12h-12z" fill="#fff"/><path d="M1 2h14" stroke="#00a" stroke-width="3"/><path d="M4 13l9-8" stroke-width="2"/>',
    rows: '<path d="M1.500 1.500h13v5h-13zM1.500 9.500h13v5h-13z" fill="#fff"/><path d="M1 2h14M1 10h14" stroke="#00a" stroke-width="3"/>',
    panel: '<path d="M.5 1.500h14v5H.5zM4.500 9.500h10v5h-10zM2 5l3-2 3 2 5-2M6 12h7"/>',
    tree: '<path d="M6.500 1.500h3v3h-3zM8 5v4M3 12l5-4 5 4"/><circle cx="3" cy="13" r="2" fill="#6c6"/><circle cx="13" cy="13" r="2" fill="#6c6"/><circle cx="8" cy="13" r="2" fill="#ff6"/>',
    find: '<path d="M1 2h9v8H1z" fill="#ff6"/><circle cx="8" cy="7" r="4" fill="#8dd"/><path d="M11 10l4 5" stroke-width="2"/>',
    find2: '<path d="M1.500 1v13.500h5M4 11V5h2v6" stroke="#c00"/><circle cx="9" cy="7" r="4" fill="#8dd"/><path d="M12 10l3 5" stroke-width="2"/>',
    table2: '<path d="M1.500 2.500h13v11h-13z" fill="#fff"/><path d="M1 3h14" stroke="#00a" stroke-width="3"/><path d="M3 7h4M9 7h4M3 10h4M9 10h4"/>',
    table3: '<path d="M1.500 2.500h13v11h-13z" fill="#fff"/><path d="M1 3h14" stroke="#00a" stroke-width="3"/><path d="M3 7h4M3 10h4"/><path d="M7 12l6-6" stroke="#cc0" stroke-width="2"/>',
    gear: '<circle cx="8" cy="9" r="5" fill="#dd0" stroke="#660" stroke-width="3" stroke-dasharray="2 1"/><path d="M7 2h2v7H7z" fill="#fff"/>',
    addcol: '<path d="M0 8h7M3.500 5v7" stroke-width="2"/><path d="M10.500 1.500h4v13h-4zM10 5h5M10 8h5M10 11h5"/>',
    sumcol: '<path d="M8 3H1l4 5-4 5h7" stroke-width="2"/><path d="M11.500 2.500h3v12h-3zM11 5h4M11 8h4M11 11h4"/>',
    sumrow: '<path d="M11 1H5l3 4-3 4h6" stroke-width="2"/><path d="M.5 11.500h15v3H.5zM4 11v4M8 11v4M12 11v4"/>',
    sort: tiny('A', 0, 7) + tiny('Z', 0, 15) + '<path d="M9 1v13M7 12l2 3 2-3M13 15V2M11 4l2-3 2 3"/>',
    setval: tiny('123', 0, 6) + '<path d="M9.500 6.500h4v9h-4zM9 9h5M9 12h5M15 1v4"/>',
    bars: '<path d="M1.500 11.500h2v3h-2zM5.500 8.500h2v6h-2zM9.500 4.500h2v10h-2zM13.500 1.500h2v13h-2z"/>',
    bars2: '<path d="M.5 1v13.500h15M3.500 4v10M6.500 8v6M9.500 3v11M12.500 9v5"/><path d="M4 4h2v4H4zM10 3h2v6h-2z"/>',
    bars3: '<path d="M0 8.500h16M2.500 4.500h2v8h-2zM7.500 1.500h2v7h-2zM12.500 5.500h2v9h-2z"/>',
    filter: '<path d="M1.500 2.500h13l-5 6v6l-3-2v-4z"/>',
    nofilter: '<path d="M1.500 2.500h13l-5 6v6l-3-2v-4z"/><path d="M2 1l13 14" stroke-width="2"/>',
    refilter: '<path d="M1.500 1.500h9l-3 4v5l-3-2v-3zM9 10l3-3 3 3M8 12l3 3 3-2"/>',
    addpeak: '<path d="M0 8h6M3 5v6M7 12l2-8 2 9 2-8 2 5"/>',
    X: '<path d="M3 3l10 11M13 3L3 14" stroke-width="2"/>',
    Y: '<path d="M2 2l6 6 6-6M8 8v6" stroke-width="2"/>',
    Z: '<path d="M3 3h9L3 14h10" stroke-width="2"/>',
    errbar: '<path d="M8 3v10M6 3h4M6 13h4M7 8h2"/>',
    home: '<path d="M1 6v4M3 6v4M1 8h2M5 6h2v4H5zM9 10V6l1 2 1-2v4M15 6h-2v4h2M13 8h2"/>',
    first: '<path d="M2 1v14M5 8h9" stroke-width="2"/><path d="M9 4v8L5 8z" fill="currentColor"/>',
    left: '<path d="M5 8h8" stroke-width="2"/><path d="M8 4v8L4 8z" fill="currentColor"/>',
    right: '<path d="M3 8h8" stroke-width="2"/><path d="M8 4v8l4-4z" fill="currentColor"/>',
    last: '<path d="M14 1v14M2 8h9" stroke-width="2"/><path d="M7 4v8l4-4z" fill="currentColor"/>',
    db: cyl + '<path d="M8 6l6 1v5l-4 3z" fill="#ccd"/>',
    dbedit: ycyl + '<path d="M8 14l6-7" stroke="#c00" stroke-width="2"/>',
    dbopen: '<path d="M.5 12V4.500h5l1 2h6v2" fill="#ff0"/><path d="M6.500 9v5q4 2 7 0V9q-4-2-7 0zM9 3q3-3 5 0" fill="#ff0"/>',
    dbview: cyl + '<circle cx="6" cy="13" r="2"/><circle cx="12" cy="13" r="2"/><path d="M13 2v6"/>',
    dbgrid: cyl + cells,
    dbdel: cyl + '<path d="M8 8l7 7M15 8l-7 7" stroke-width="2"/>',
    wizard: cells + '<path d="M0 9l7-7M3 1v3M1 3h4"/><path d="M9 3h5v3" stroke="#d00" stroke-width="2"/>',
    imp1: cells + tiny('123', 0, 5) + '<path d="M13 2h2v4" stroke="#d00" stroke-width="2"/>',
    imp2: cells + tiny('123', 0, 5) + '<path d="M3 11h11M14 2h2v4" stroke="#d00"/>',
    excel: cells + '<path d="M1 1l7 7M8 1L1 8" stroke="#187a50" stroke-width="2"/><path d="M12 2h3v4" stroke="#d00" stroke-width="2"/>',
    reimp: cells + '<path d="M4 4q4-4 8 0M10 1l3 3-3 2"/>',
    reimp2: '<path d="M4 4q4-4 8 0M10 1l3 3-3 2M1 10h14M3 8v7M8 8v7M12 8v7"/>',
    reimp3: '<path d="M1.500 1.500h6v5h-6zM1 4h7M4.500 1v6M10 2h4v5M6.500 8.500h8v6h-8zM6 11h9M10.500 8v7"/>',
    batch: '<path d="M1.500 1.500h5l2 2v7h-7zM4.500 4.500h5l2 2v6h-7zM7.500 7.500h7v7h-7z" fill="#fff"/><path d="M10 2h4v4" stroke="#d00" stroke-width="2"/>',
    cut: '<path d="M5 1l5 9M11 1l-5 9"/><circle cx="5" cy="12" r="2" stroke="#24a"/><circle cx="11" cy="12" r="2" stroke="#24a"/>',
    copy: '<path d="M1.500 1.500h6l2 2v8h-8zM6.500 5.500h6l2 2v7h-8z" fill="#eef4ff" stroke="#2a62b8"/><path d="M8 9h5M8 11h5M3 5h3" stroke="#2a62b8"/>',
    paste: '<path d="M1.500 2.500h11v12h-11z" fill="#e8a838" stroke="#8a5a10"/><path d="M4.500.5h5v3h-5z" fill="#ccc"/><path d="M7.500 7.500h7v8h-7z" fill="#fff"/><path d="M9 10h4M9 12h4"/>',
    B: ch('B', 3, 'class="strong"'),
    I: ch('I', 5, 'class="strong slant"'),
    U: ch('U', 2, 'class="strong"') + '<path d="M2 15h12"/>',
    sup: ch('x', 1) + tiny('2', 10, 7),
    sub: ch('x', 1) + tiny('2', 10, 15),
    supsub: ch('x', 1) + tiny('2', 10, 7) + tiny('1', 10, 15),
    greek: ch('αβ', 0),
    Abig: '<path d="M11 4l2-2 2 2M13 2v3M2 14l5-12 5 12M4 10h6M0 14h4M10 14h4"/>',
    Asmall: '<path d="M3 13l3-8 3 8M4 10h4M11 1l2 2 2-2M2 13h2M8 13h2"/>',
    align: '<path d="M2 3h12M2 6h8M2 9h12M2 12h8"/>',
    vlines: '<path d="M2 2v9M5 2v12M8 2v9M11 2v12M14 2v9"/>',
    Acolor: '<path d="M4 10l4-9 4 9M5 7h6"/><path d="M1 14h14" stroke-width="3"/>',
    bucket: '<path d="M4 7l5-5 5 5-5 4zM6 1l3 4" fill="#fff"/><path d="M13 6v5" stroke="#00a" stroke-width="2"/><path d="M1.500 12.500h13v3h-13z" fill="#fff"/>',
    palette: '<path d="M2 6q1-5 7-5t6 6q-3 4-6 2-7 2-7-3z" fill="#bbc"/><path d="M2 14h12" stroke-width="3"/>',
    pen: '<path d="M4 9l7-8 2 2-7 7-3 1z" fill="#fff"/><path d="M1 14h14" stroke-width="4"/>',
    sun: '<path d="M8 0v16M0 8h16M2 2l12 12M14 2L2 14" stroke="#a80"/><circle cx="8" cy="8" r="4" fill="#ff0" stroke="#a80"/>',
    hatch: '<path d="M1 5l4-4M1 10l9-9M5 10l9-9M9 10l6-6" stroke-width="2"/><path d="M1 13h14" stroke-width="3"/>',
    border: '<path d="M2.500 2.500h11v10h-11zM8 2v10M2 7h12" stroke-dasharray="1 1"/><path d="M1 14h14"/>',
    merge: '<path d="M1.500 1.500h13v13h-13zM1 5.500h14M1 10.500h14M8 1v4M8 11v4M3 8h3M10 8h3"/>',
    maskM: '<path d="M1 1v14M15 1v14M4 12V4l4 5 4-5v8"/>',
    maskX: '<path d="M1 1v14M15 1v14M4 3l8 10M12 3L4 13"/>',
    updown: '<path d="M3 4v8M1 6l2-2 2 2M1 10l2 2 2-2M11 1v14M9 4h4M9 11h4M7 8h8"/>',
    updown2: '<path d="M3 4v8M1 6h4M1 10h4M5 9l10-4M9 2v5M12 5v8"/>',
    lock: '<path d="M1 1v14M15 1v14M5 8V5q3-4 6 0v3"/><path d="M4.500 7.500h7v6h-7z" fill="#889"/>',
    cursor: '<path d="M4.500 1v12l3-3 2 5 2-1-2-4h4z" fill="#fff"/>',
    zoomin: '<circle cx="6" cy="6" r="5"/><path d="M3 6h6M6 3v6M1 12v3h4"/><path d="M10 10l5 5" stroke-width="2"/>',
    zoomout: '<circle cx="6" cy="6" r="5"/><path d="M6 3v6M1 12v3h4"/><path d="M10 10l5 5" stroke-width="2"/>',
    cross: '<path d="M8 2v12M2 8h12M5.500 6.500h5v3h-5z"/>',
    target: '<circle cx="8" cy="8" r="5"/><path d="M8 0v6M8 10v6M0 8h6M10 8h6M7 8h2"/>',
    reader: '<path d="M8 1v5M6 4l2 2 2-2M8 15v-5M6 12l2-2 2 2" stroke-width="2"/>',
    ellipse: '<ellipse cx="9" cy="11" rx="6" ry="4" fill="#9aa0b0"/><path d="M2 1v6M0 4l2 2 2-2"/>',
    mask: '<path d="M3 1v5M1 4l2 2 2-2M2 14l12-8M7 7v8M8 7h6M10 10h4v5"/>',
    dots: '<path d="M4 4h2M9 3h2M3 8h2M12 8h2M6 12h2M11 12h2" stroke-width="2"/>',
    text: '<path d="M3 3h11M8.500 3v10M6 13h5M3 2v3M14 2v3" stroke-width="2"/>',
    region: '<path d="M1.500 4.500h11v10h-11zM7 4v4M7 11v4M1 9h4M9 9h4"/><path d="M13 5V1h3v4M13 3h3" stroke="#f00"/>',
    arrow: '<path d="M2 14L12 4" stroke-width="2"/><path d="M7 3h7v7z" fill="#000"/>',
    line: '<path d="M2 14L14 2" stroke-width="2"/>',
    rect: '<path d="M2.500 3.500h12v9h-12z" fill="#a0a0a0"/>',
    hand: '<path d="M4 13L1 8l2-1 2 2V3h2v4-6h2v6-5h2v5-3h2v7l-2 4H5z" fill="#fff"/>',
    formula: page + '<path d="M4 9l2 3 2-6h4M9 9h3v3H9z" stroke="#709"/>',
    minigraph: page + '<path d="M4.500 6v7h8M6 10l2-2 2 3 2-5" stroke="#d00"/>',
    pan: '<path d="M4 11L2 7l2 1V4l2 3V1l2 5V2l2 5V5l1 6-2 2H5zM0 14h16M14 1v14"/>',
    rotate3d: `<path d="M5.500 4.500l4-3h6v10l-3 4h-7z" ${red}/><path d="M12.500 15V5M6 4h6l3-3"/><path d="M2 7q1 3 8 2M8 6l4 3-4 3" ${blue}/>`,
    colorbars: '<path d="M0 2h16" stroke="#f00" stroke-width="3"/><path d="M0 6h16" stroke="#ff0" stroke-width="3"/><path d="M0 10h16" stroke="#00f" stroke-width="3"/><path d="M0 14h16" stroke="#080" stroke-width="3"/>',
    bubble: '<circle cx="8" cy="8" r="7"/><circle cx="8" cy="10" r="5"/><circle cx="8" cy="13" r="2"/>',
    legend: '<path d="M.5 15V.5h15V15M2 5h6"/><path d="M2 11h6M5 9v4" stroke="#00f"/>' + tiny('B', 9, 7) + tiny('C', 9, 14),
    star: '<path d="M.5 15V9.500h15V15M8 1v6M5 2l6 4M11 2L5 6"/>',
    scale: '<path d="M3.500.5h8v15h-8M5 4h4M7 2v4M5 10h4M7 8v4M10 3h2M10 7h2M10 11h2"/>',
    clock: '<circle cx="7" cy="7" r="6" fill="#fff"/><path d="M7 3v4h3"/><path d="M9 8h4l-1 4h3v3H7v-3h3z" fill="#f00"/>',
    stamp: '<path d="M.5 2.500h5l1 1h6v8H.5z" fill="#aab"/><path d="M9 8h4l-1 4h3v3H7v-3h3z"/>',
    grid: '<path d="M1.500 3.500h13v10h-13zM1 6.500h14M1 10.500h14M6 3v11M10 3v11"/>',
    scatter: '<path d="M2 12h3M6 7h3M10 3h3M9 12h3" stroke-width="3"/>',
    linedot: '<path d="M3 13L13 3"/><path d="M2 12h3M7 8h3M11 3h3" stroke-width="3"/>',
    column: '<path d="M1.500 7.500h3v8h-3zM6.500 1.500h3v14h-3zM11.500 4.500h3v11h-3z" fill="#778"/>',
    peaks: '<path d="M.5.5h15v15H.5zM1 12l5-8 3 6 6-7M2 3l10 10"/>',
    box: '<path d="M8 0v4M5 1h6M3.500 4.500h9v6h-9zM3 7h10M8 11v4M5 15h6"/>',
    area: '<path d="M1 15V4l4 5 4-3 3 4 3-5v10z" fill="#667"/>',
    polar: '<circle cx="9" cy="8" r="6"/><path d="M1 0v16M8 11V6h3"/>',
    candle: '<path d="M4 0v3M2.500 3.500h3v8h-3zM4 12v3M11 2v3M11 12v4"/><path d="M9.500 5.500h4v7h-4z" fill="#889"/>',
    cube: '<path d="M1.500 5.500l4-4h9v9l-4 4h-9zM5 7h6v5H5z" fill="#99a"/>',
    bar3d: '<path d="M1.500 5l4-4h9v9l-4 5h-9zM5 8v5M8 5v8M11 3v9" fill="#dde"/>',
    surface: '<path d="M1.500 7l5-5h8v6l-4 6h-9z" fill="#99a"/>',
    wire: '<path d="M1.500 5l4-4h9v9l-4 5h-9zM6 1v9l-4 5M6 10h9M8 5h2M10 8h2"/>',
    heat: '<path d="M1.500 1.500h13v13h-13z" fill="#aab"/><path d="M1 5h14M1 9h14M5 1v14M9 1v14"/>',
    wave: '<path d="M1 7q4-10 7-2t7-2M1.500 8.500h13v6h-13zM1 11h14M6 8v7M10 8v7"/>',
    contour: '<path d="M1.500.5h14v15h-14z" fill="#99a"/><path d="M2 10q5-6 7 0t6 4" stroke="#ccd"/>',
    fox: '<path d="M2.500 1v7l3 4h5l3-4V1l-4 3h-3z" fill="#eef"/><path d="M5 6h2M9 6h2M7 9h2M1 14h14"/>',
    foxoff: '<path d="M2.500 1v7l3 4h5l3-4V1l-4 3h-3zM1 1l14 12M15 1L1 13M1 14h14"/>',
    mask2: '<path d="M2.500 2q5 2 11 0v8l-5 4-6-4z" fill="#99a"/><path d="M5 6h2M9 6h2M6 10h4"/>',
    swap: '<path d="M0 5h9M0 10h9" stroke-width="3" stroke-dasharray="3 1"/><path d="M13 1v14M11 3l2-2 2 2M11 13l2 2 2-2"/>',
    swapred: '<path d="M0 5h9" stroke="#f00" stroke-width="3" stroke-dasharray="3 1"/><path d="M0 10h9" stroke-width="3" stroke-dasharray="3 1"/><path d="M13 1v14M11 3l2-2 2 2M11 13l2 2 2-2"/>',
    swapall: '<path d="M0 5h9" stroke="#f00" stroke-width="3" stroke-dasharray="3 1"/><path d="M0 10h9" stroke-width="3" stroke-dasharray="3 1"/><path d="M13 1v14M11 3l2-2 2 2M11 13l2 2 2-2"/>',
    rotL: `<path d="M5.500 1.500h6v13h-6z" ${red}/><path d="M1 9q0 3 7 3t7-4M11 5h3v3" ${blue}/>`,
    rotR: `<path d="M5.500 1.500h6v13h-6z" ${red}/><path d="M15 9q0 3-7 3T1 8M5 5H2v3" ${blue}/>`,
    tiltL: `<path d="M1 3l5-2 3 12-4 2z" ${red}/><path d="M9 4h7M12 1L9 4l3 3" ${blue}/>`,
    tiltR: `<path d="M10 1l5 2-3 12-5-2z" ${red}/><path d="M0 4h7M4 1l3 3-3 3" ${blue}/>`,
    tiltD: `<path d="M4.500 5.500h7l2 5h-11zM.5 11.500h15v4H.5z" ${red}/><path d="M8 0v9M5 6l3 3 3-3" ${blue}/>`,
    tiltU: `<path d="M.5.5h15v4H.5zM2.500 5.500h11l-3 7h-5z" ${red}/><path d="M8 16V7M5 10l3-3 3 3" ${blue}/>`,
    persp: `<path d="M5.500.5h5v3h-5zM.5 8.500h15v7H.5z" ${red}/><path d="M5 3L2 8M11 3l3 5M7 4v4M9 4v4" stroke="#00f"/>`,
    persp2: `<path d="M7.500.5h8v7h-8zM.5 7.500h9v8h-9z" ${red}/><path d="M1 7l6-6M10 15l6-7" stroke="#00f"/>`,
    fit: `<path d="M5.500 5.500h5v5h-5z" ${red}/><path d="M1 5V1h4M1 1l4 4M11 1h4v4M15 1l-4 4M1 11v4h4M1 15l4-4M15 11v4h-4M15 15l-4-4" ${blue}/>`,
    axes3d: `<path d="M8 0v6M10 9h6M6 10l-5 5" ${blue}/><path d="M4.500 6.500l2-2h5v5l-2 2h-5z" ${red}/>`,
    box3d: `<path d="M.5 4.500l4-4h11v10l-4 5H.5z" stroke="#00f"/><path d="M4.500 6.500l2-2h5v5l-2 2h-5z" ${red}/>`,
    stack: '<path d="M8 2h7M5 6h7M2 10h7M1 14h6" stroke-width="3" stroke-dasharray="4 1"/>',
    axA: '<path d="M3.500 2v12h11M4 13l9-9M1 4l2-3 3 3M12 12l3 2-3 2M10 3h3v3" stroke="#f00"/>',
    axB: '<path d="M2.500 1v12M3 13l9-9"/><path d="M3 13.500h12M12 11l3 2-3 3" stroke="#f00"/>',
    axC: '<path d="M3 13.500h12M4 13l9-9"/><path d="M3.500 14V1M1 4l2-3 3 3" stroke="#f00"/>',
    xy: '<path d="M1 6l5 5M6 6l-5 5M10 5l3 3 3-3M13 8v4M3 3q5-4 9 0M4 14q5 2 9-1"/>',
    speed: '<path d="M1.500 1v13.500H15M1 4h2M1 8h2M6 15v-2M10 15v-2"/><path d="M5 5l4-1 2 2-2 3-4 2M9 9l3 3M11 5l3 2M11 2h2" stroke-width="2"/>',
    lay1: '<path d="M.5.500h15v14H.5zM1 7h14M3 2v3h9M3 9v3h3M9 9v3h3"/>',
    lay2: '<path d="M.5.500h15v6H.5zM.5 9.500h6v6h-6zM9.500 9.500h6v6h-6zM3 2v2h3M9 2v2h3M3 11v2h2M12 11v2h2"/>',
    lay3: '<path d="M.5.500h6v6h-6zM9.500.500h6v6h-6zM.5 9.500h15v6H.5zM3 2v2h2M12 2v2h2M3 11v2h3M9 11v2h3"/>',
    lay4: '<path d="M.5 1.500h15v5H.5zM1.500 8.500h10v4h-10zM4.500 10.500h11v5h-11zM2 5l3-2 3 2 5-2M6 14l3-2 5 2"/>',
    axL: '<path d="M2.500 1v12.500H15M2 2h3M2 6h3M2 10h3M6 13v-2M10 13v-2"/>',
    axT: '<path d="M2 2.500h12M4 2v3M8 2v3M12 2v3"/><path d="M2.500 3v11H14V3" stroke="#999" stroke-dasharray="2 1"/>',
    axR: '<path d="M13.500 2v12M14 3h-3M14 7h-3M14 11h-3"/><path d="M2.500 2v12H13" stroke="#999" stroke-dasharray="2 1"/>',
    axBox: '<path d="M2.500 2.500h12v11h-12zM5 2v3M9 2v3M5 14v-2M9 14v-2M2 6h2M2 10h2M15 6h-3M15 10h-3"/>',
    axin: '<path d="M2.500 2v12H15" stroke="#999" stroke-dasharray="2 1"/><path d="M8.500 2v6H15M8 4h2M8 6h2"/>',
    axinr: '<path d="M2.500 2v12H15" stroke="#999" stroke-dasharray="2 1"/><path d="M8.500 3v6H15"/><path d="M10 8l4-5M11 3v4h4" stroke="#f00"/>',
    alL: '<path d="M1 1v15" stroke-dasharray="2 1"/><path d="M4.500 1.500h6v5h-6zM4.500 9.500h11v5h-11z"/>',
    alR: '<path d="M14 1v15" stroke-dasharray="2 1"/><path d="M5.500 1.500h6v5h-6zM1.500 9.500h10v5h-10z"/>',
    alT: '<path d="M1 1h15" stroke-dasharray="3 1"/><path d="M1.500 3.500h5v11h-5zM9.500 3.500h5v6h-5z"/>',
    alB: '<path d="M1 15h15" stroke-dasharray="3 1"/><path d="M1.500 2.500h5v10h-5zM9.500 6.500h5v6h-5z"/>',
    alH: '<path d="M4.500 2.500h7v4h-7zM2.500 9.500h11v4h-11zM8 0v4M8 6v5M8 13v3"/>',
    alV: '<path d="M2.500 3.500h5v10h-5zM9.500 5.500h4v6h-4zM0 8h16"/>',
    same1: '<path d="M3.500 1.500h7v5h-7zM5.500 9.500h7v5h-7z"/><path d="M1 1v6M13 1v6M3 9v6M15 9v6" stroke-dasharray="2 1"/>',
    same2: '<path d="M1.500 4.500h5v8h-5zM9.500 6.500h5v8h-5z"/><path d="M1 2h6M1 15h6M9 4h6" stroke-dasharray="2 1"/>',
    dist1: '<path d="M.5 4.500h3v7h-3zM6.500 2.500h3v12h-3zM12.500 6.500h3v3h-3zM4 8h2M10 8h2"/>',
    dist2: '<path d="M6.500.5h3v3h-3zM1.500 6.500h13v3h-13zM4.500 12.500h8v3h-8z"/>',
    front: '<path d="M.5 1.500h6v5h-6zM9.500 9.500h6v5h-6z" fill="#a9adba"/><path d="M3.500 4.500h8v7h-8z" fill="#eef"/>',
    back: '<path d="M4.500 4.500h7v7h-7z" fill="#eef"/><path d="M.5 1.500h6v5h-6zM9.500 9.500h6v5h-6z" fill="#a9adba"/>',
    grp1: '<path d="M4.500 4.500h8v7h-8z"/><path d="M1 4v11M15 4v11" stroke-dasharray="1 2"/>',
    grp2: '<path d="M4.500 4.500h8v7h-8zM6 6h1M9 6h1M7 8h2M6 10h1M10 10h1"/><path d="M1 3v11M15 4v11" stroke-dasharray="1 2"/>',
    grp3: '<path d="M2.500 2.500h7v7h-7zM6.500 6.500h8v8h-8z" fill="#eef"/><path d="M0 1h3M13 1h3M0 14h3M13 14h3" stroke-width="3"/>',
    grp4: '<path d="M2.500 2.500h7v7h-7zM6.500 6.500h7v7h-7z" fill="#eef"/><path d="M0 1h3M8 1h3M0 9h3M5 5h3M13 5h3M5 14h3M13 14h3" stroke-width="3"/>'
};

// "~" = greyed icon, "!" = pressed, ">" = has a drop-down, "|" = separator
document.querySelectorAll('[data-tools]').forEach(group => {
    group.innerHTML = group.dataset.tools.split(' ').map(token => {
        if (token === '|') {
            return '<i class="sep"></i>';
        }
        const name = token.replace(/[~!>]/g, '');
        const cls = 'tool' + (token.includes('~') ? ' muted' : '') + (token.includes('!') ? ' on' : '');
        return `<button class="${cls}" aria-label="${name}"><svg viewBox="0 0 16 16">${icons[name]}</svg></button>` +
            (token.includes('>') ? `<button class="drop" aria-label="${name} options"></button>` : '');
    }).join('');
});

document.querySelectorAll('.toolbar').forEach(bar => {
    bar.insertAdjacentHTML('afterbegin', '<i class="grip"></i>');
    bar.insertAdjacentHTML('beforeend', '<button class="overflow" aria-label="Toolbar options"></button>');
});

document.querySelectorAll('.panel-tools').forEach(el => {
    el.innerHTML = '<svg viewBox="0 0 44 10"><path d="M1 3h9L5.500 8z"/><path d="M19 6h7M20.500 6V1h4v5M23.500 1v5M22.500 6v4M36 1l7 8M43 1l-7 8" fill="none" stroke="#000"/></svg>';
});

// 3D graph: corner points of the box and tick positions
const lerp = (a, b, t) => [a[0] + (b[0] - a[0]) * t, a[1] + (b[1] - a[1]) * t];
const topLeft = [231, 178], bottomLeft = [217, 765];
const topBack = [538, 199], bottomBack = [521, 686];
const topRight = [1005, 213], bottomRight = [977, 750];
const zTicks = [765, 731, 695, 659, 624, 588, 552, 516, 480, 443, 407, 371, 334, 298, 261, 224, 187];
const xTicks = [[281, 777], [357, 790], [436, 803], [518, 817], [603, 832], [690, 847]];
const yTicks = [[784, 837], [823, 819], [863, 802], [899, 786], [933, 771], [966, 757]];
const leftWall = [0.16, 0.34, 0.5, 0.655, 0.796, 0.938];
const rightWall = [0.125, 0.276, 0.428, 0.588, 0.748, 0.914];

let grid = '', ticks = '', labels = '';
const seg = (a, b) => `<path d="M${a}L${b}"/>`;
const label = (cls, x, y, angle, value, anchor) =>
    `<text class="${cls}" text-anchor="${anchor}" transform="translate(${x} ${y}) rotate(${angle})">${value}</text>`;

zTicks.forEach((y, i) => {
    const t = (765 - y) / 587;
    const p = lerp(bottomLeft, topLeft, t);
    const q = lerp(bottomBack, topBack, t);
    grid += seg(p, q) + seg(q, lerp(bottomRight, topRight, t));
    ticks += seg([p[0] - 7, p[1] + (i < 6 ? 2 : 0)], p);
    labels += label('z-label', p[0] - 12, p[1] + 5 + (16 - i) / 2, i < 10 ? -4 : 0, i * 2000, 'end');
    if (i < 16) {
        const m = lerp(bottomLeft, topLeft, t + 0.031);
        ticks += seg([m[0] - 4, m[1]], m);
    }
});

for (let i = 0; i < 6; i++) {
    const a = lerp(bottomLeft, bottomBack, leftWall[i]);
    const b = lerp(bottomBack, bottomRight, rightWall[i]);
    grid += seg(a, lerp(topLeft, topBack, leftWall[i]));
    grid += seg(b, lerp(topBack, topRight, rightWall[i]));
    grid += seg(xTicks[i], b) + seg(a, yTicks[i]);
    const [x, y] = xTicks[i], [u, v] = yTicks[i];
    ticks += seg([x - 6, y + 2], [x + 2, y - 1]) + seg([u - 2, v - 1], [u + 8, v + 1]);
    const n = i ? xTicks[i - 1] : bottomLeft, w = i ? yTicks[i - 1] : [738, 854];
    const h = lerp(n, xTicks[i], 0.5), k = lerp(w, yTicks[i], 0.5);
    ticks += seg([h[0] - 3, h[1] + 1], h) + seg(k, [k[0] + 4, k[1] + 1]);
    labels += label('x-label', x - 6, y + 8, -28, (i + 1) * 5000, 'end');
    labels += label('y-label', u + 15, v + 7, 10, (i + 1) * 5000, 'start');
}

document.getElementById('grid').innerHTML = grid;
document.getElementById('ticks').innerHTML = ticks;
document.getElementById('labels').innerHTML = labels;
```
